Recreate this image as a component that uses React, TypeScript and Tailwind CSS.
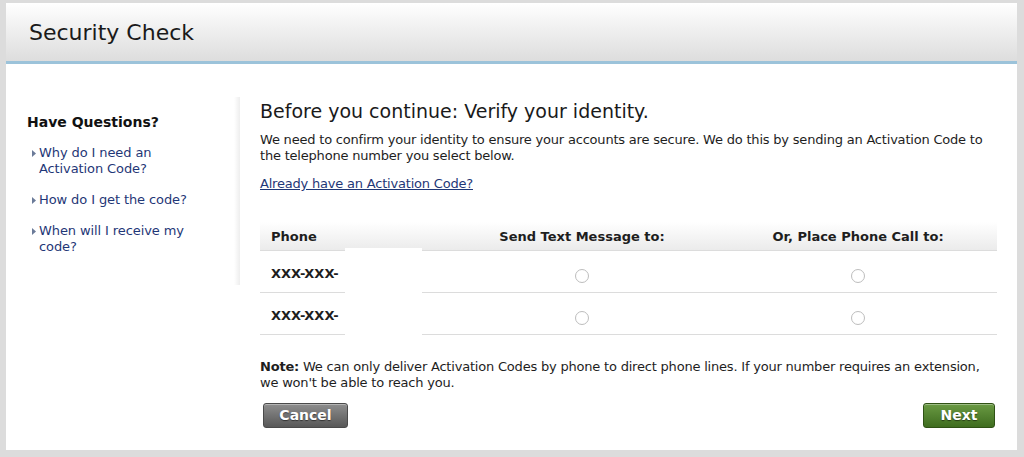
import React from "react";

const font = { fontFamily: '"DejaVu Sans", Verdana, sans-serif' };

function Bullet() {
  return (
    <svg width="4" height="7" viewBox="0 0 4 7" className="mt-[5px] shrink-0">
      <polygon points="0,0 4,3.5 0,7" fill="#6b7b99" />
    </svg>
  );
}

function Radio() {
  return <span className="block w-[14px] h-[14px] rounded-full border border-[#bdbdbd] bg-white" />;
}

export default function App() {
  const rows = ["XXX-XXX-", "XXX-XXX-"];
  return (
    <div className="w-[1024px] h-[457px] bg-[#dcdcdc] pt-[3px] pl-[6px] pr-[7px] pb-[7px] text-[#1e1e1e]" style={font}>
      <div className="h-full bg-white flex flex-col">
        <div className="h-[58px] shrink-0 bg-gradient-to-b from-white to-[#dddddd] flex items-center pl-[23px]">
          <h1 className="text-[22px] leading-none text-[#1a1a1a] pt-[2px]">Security Check</h1>
        </div>
        <div className="h-[3px] shrink-0 bg-[#9cc3da]" />
        <div className="flex flex-1">
          <div className="w-[234px] shrink-0 pt-[33px]">
            <div className="flex h-[188px]">
              <div className="flex-1 pl-[21px] pt-[16px]">
                <h2 className="text-[14px] leading-[18px] font-bold text-[#111]">Have Questions?</h2>
                <ul className="mt-[14px] flex flex-col gap-[15px] text-[13px] leading-[16px] tracking-[-0.1px] text-[#1f3777]">
                  <li className="flex gap-[3px] pl-[5px]">
                    <Bullet />
                    <a className="w-[165px]">Why do I need an Activation Code?</a>
                  </li>
                  <li className="flex gap-[3px] pl-[5px]">
                    <Bullet />
                    <a className="w-[165px]">How do I get the code?</a>
                  </li>
                  <li className="flex gap-[3px] pl-[5px]">
                    <Bullet />
                    <a className="w-[165px]">When will I receive my code?</a>
                  </li>
                </ul>
              </div>
              <div className="w-[6px] bg-gradient-to-r from-white to-[#eeeeee]" />
            </div>
          </div>
          <div className="flex-1 pl-[20px] pr-[20px] pt-[35px]">
            <h2 className="text-[19px] leading-[24px] text-[#1a1a1a]">Before you continue: Verify your identity.</h2>
            <p className="mt-[9px] text-[13px] leading-[16px] tracking-[-0.2px] text-[#1e1e1e]">
              We need to confirm your identity to ensure your accounts are secure. We do this by sending an Activation Code to the telephone number you select below.
            </p>
            <a className="block mt-[12px] text-[13px] leading-[16px] tracking-[-0.2px] text-[#1f3777] underline">Already have an Activation Code?</a>
            <div className="relative mt-[30px]">
              <div className="grid grid-cols-[185px_274px_1fr] h-[29px] items-center pt-[2px] bg-gradient-to-b from-white to-[#ebebeb] border-b border-[#dcdcdc] text-[13px] font-bold text-[#1e1e1e]">
                <div className="pl-[11px]">Phone</div>
                <div className="text-center">Send Text Message to:</div>
                <div className="text-center">Or, Place Phone Call to:</div>
              </div>
              {rows.map((r, i) => (
                <div key={i} className="grid grid-cols-[185px_274px_1fr] h-[42px] items-center border-b border-[#dcdcdc] text-[13px] font-bold text-[#1e1e1e]">
                  <div className="pl-[11px] pt-[4px]">{r}</div>
                  <div className="flex justify-center pt-[9px]"><Radio /></div>
                  <div className="flex justify-center pt-[9px]"><Radio /></div>
                </div>
              ))}
              <div className="absolute left-[85px] top-[26px] w-[77px] h-[88px] bg-white" />
            </div>
            <p className="mt-[24px] text-[13px] leading-[16px] tracking-[-0.2px] text-[#1e1e1e]">
              <b>Note:</b> We can only deliver Activation Codes by phone to direct phone lines. If your number requires an extension, we won't be able to reach you.
            </p>
            <div className="mt-[12px] flex justify-between">
              <button className="ml-[3px] w-[85px] h-[25px] rounded-[3px] border border-[#4a4a4a] bg-gradient-to-b from-[#8e8e8e] to-[#585858] text-white text-[14px] font-bold [text-shadow:0_1px_1px_rgba(0,0,0,0.5)] shadow-[inset_0_1px_0_rgba(255,255,255,0.35)]">
                Cancel
              </button>
              <button className="mr-[2px] w-[72px] h-[25px] rounded-[3px] border border-[#2f5215] bg-gradient-to-b from-[#6a9a43] to-[#3f6d1f] text-white text-[14px] font-bold [text-shadow:0_1px_1px_rgba(0,0,0,0.5)] shadow-[inset_0_1px_0_rgba(255,255,255,0.35)]">
                Next
              </button>
            </div>
          </div>
        </div>
      </div>
    </div>
  );
}
